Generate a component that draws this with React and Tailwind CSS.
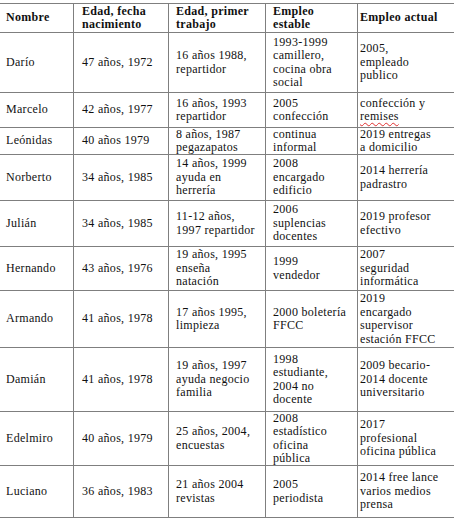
import React from "react";

const rows = [
  { h: "grid-rows-[59px]", c: [["Darío"], ["47 años, 1972"], ["16 años 1988,", "repartidor"], ["1993-1999", "camillero,", "cocina obra", "social"], ["2005,", "empleado", "publico"]] },
  { h: "grid-rows-[34px]", c: [["Marcelo"], ["42 años, 1977"], ["16 años, 1993", "repartidor"], ["2005", "confección"], ["confección y", "__remises"]] },
  { h: "grid-rows-[26px]", c: [["Leónidas"], ["40 años 1979"], ["8 años, 1987", "pegazapatos"], ["continua", "informal"], ["2019 entregas", "a domicilio"]] },
  { h: "grid-rows-[45px]", c: [["Norberto"], ["34 años, 1985"], ["14 años, 1999", "ayuda en", "herrería"], ["2008", "encargado", "edificio"], ["2014 herrería", "padrastro"]] },
  { h: "grid-rows-[45px]", c: [["Julián"], ["34 años, 1985"], ["11-12 años,", "1997 repartidor"], ["2006", "suplencias", "docentes"], ["2019 profesor", "efectivo"]] },
  { h: "grid-rows-[43px]", c: [["Hernando"], ["43 años, 1976"], ["19 años, 1995", "enseña", "natación"], ["1999", "vendedor"], ["2007", "seguridad", "informática"]] },
  { h: "grid-rows-[56px]", c: [["Armando"], ["41 años, 1978"], ["17 años 1995,", "limpieza"], ["2000 boletería", "FFCC"], ["2019", "encargado", "supervisor", "estación FFCC"]] },
  { h: "grid-rows-[63px]", c: [["Damián"], ["41 años, 1978"], ["19 años, 1997", "ayuda negocio", "familia"], ["1998", "estudiante,", "2004 no", "docente"], ["2009 becario-", "2014 docente", "universitario"]] },
  { h: "grid-rows-[53px]", c: [["Edelmiro"], ["40 años, 1979"], ["25 años, 2004,", "encuestas"], ["2008", "estadístico", "oficina", "pública"], ["2017", "profesional", "oficina pública"]] },
  { h: "grid-rows-[51px]", c: [["Luciano"], ["36 años, 1983"], ["21 años 2004", "revistas"], ["2005", "periodista"], ["2014 free lance", "varios medios", "prensa"]] },
];

const pads = ["pl-[6px]", "pl-[8px]", "pl-[7px]", "pl-[7px]", "pl-[2px]"];

function Lines({ lines }) {
  return (
    <div>
      {lines.map((l, i) =>
        l.startsWith("__") ? (
          <div key={i} className="whitespace-nowrap">
            <span className="underline decoration-wavy decoration-[#e03030] decoration-1 underline-offset-2">{l.slice(2)}</span>
          </div>
        ) : (
          <div key={i} className="whitespace-nowrap">{l}</div>
        )
      )}
    </div>
  );
}

export default function App() {
  const header = [["Nombre"], ["Edad, fecha", "nacimiento"], ["Edad, primer", "trabajo"], ["Empleo", "estable"], ["Empleo actual"]];
  return (
    <div className="w-[454px] h-[521px] bg-white overflow-hidden pt-[3px] text-[#111] text-[12px] leading-[13.5px] tracking-[0.3px]" style={{ fontFamily: '"Liberation Serif", serif' }}>
      <div className="w-[454px] border-y border-[#7f7f7f] bg-[#7f7f7f] flex flex-col gap-px">
        <div className="grid grid-rows-[28px] grid-cols-[73px_94px_96px_91px_96px] gap-px">
          {header.map((c, j) => (
            <div key={j} className={`bg-white min-h-0 flex items-center font-bold ${pads[j]}`}>
              <Lines lines={c} />
            </div>
          ))}
        </div>
        {rows.map((r, i) => (
          <div key={i} className={`grid ${r.h} grid-cols-[73px_94px_96px_91px_96px] gap-px`}>
            {r.c.map((c, j) => (
              <div key={j} className={`bg-white min-h-0 flex items-center ${pads[j]}`}>
                <Lines lines={c} />
              </div>
            ))}
          </div>
        ))}
      </div>
    </div>
  );
}
